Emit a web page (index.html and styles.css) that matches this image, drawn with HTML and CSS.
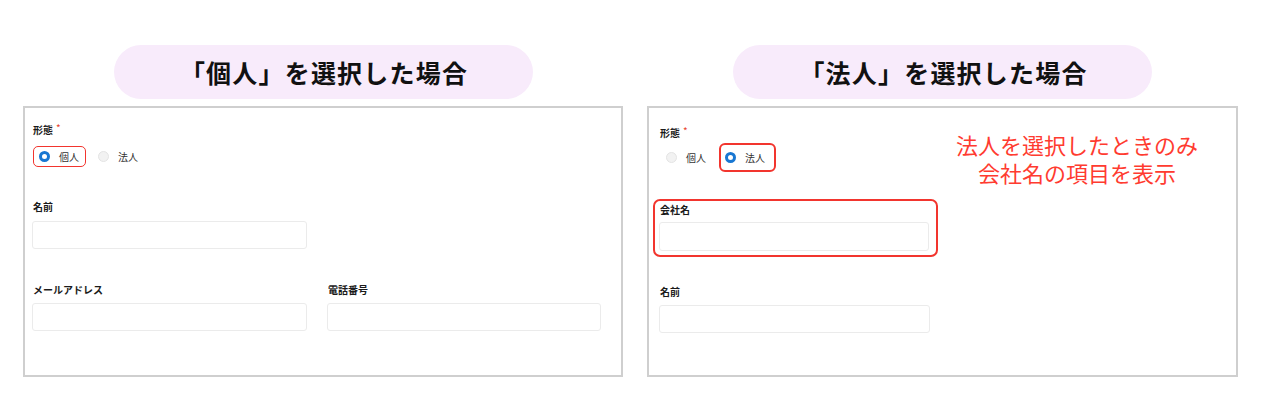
FILE: index.html
```html
<!DOCTYPE html>
<html lang="ja">
<head>
<meta charset="utf-8">
<link rel="stylesheet" href="styles.css">
</head>
<body>
<div class="page">
  <section class="col col-left">
    <h2 class="pill">「個人」を選択した場合</h2>
    <div class="panel panel-left">
      <div class="field">
        <div class="label">形態<span class="req">*</span></div>
        <div class="radios">
          <label class="radio marked"><span class="dot on"></span><span>個人</span></label>
          <label class="radio"><span class="dot"></span><span>法人</span></label>
        </div>
      </div>
      <div class="field f-name">
        <div class="label">名前</div>
        <div class="input w-half"></div>
      </div>
      <div class="row2 f-mail">
        <div class="field">
          <div class="label">メールアドレス</div>
          <div class="input"></div>
        </div>
        <div class="field">
          <div class="label">電話番号</div>
          <div class="input"></div>
        </div>
      </div>
    </div>
  </section>
  <section class="col col-right">
    <h2 class="pill">「法人」を選択した場合</h2>
    <div class="panel panel-right">
      <div class="field">
        <div class="label">形態<span class="req">*</span></div>
        <div class="radios">
          <label class="radio"><span class="dot"></span><span>個人</span></label>
          <label class="radio marked"><span class="dot on"></span><span>法人</span></label>
        </div>
      </div>
      <div class="company">
        <div class="label">会社名</div>
        <div class="input"></div>
      </div>
      <div class="field f-name2">
        <div class="label">名前</div>
        <div class="input w-right"></div>
      </div>
      <p class="note">法人を選択したときのみ<br>会社名の項目を表示</p>
    </div>
  </section>
</div>
</body>
</html>
```

FILE: styles.css
```css
* { box-sizing: border-box; }
html, body { margin: 0; padding: 0; background: #fff; }
body {
  font-family: "Noto Sans CJK JP", "Noto Sans", sans-serif;
  color: #1b1b1b;
  width: 1266px;
  height: 403px;
  overflow: hidden;
}
.page {
  display: flex;
  gap: 24px;
  padding-left: 23px;
}
.col {
  display: flex;
  flex-direction: column;
  align-items: center;
}
.col-left { width: 600px; }
.col-right { width: 591px; }
.pill {
  margin: 45px 0 0;
  width: 419px;
  height: 54px;
  border-radius: 27px;
  background: #f8ebfb;
  display: flex;
  align-items: center;
  justify-content: center;
  font-size: 25px;
  font-weight: 700;
  letter-spacing: 1.2px;
  color: #111;
  padding-left: 2px;
}
.panel {
  margin-top: 7px;
  width: 100%;
  height: 271px;
  border: 2px solid #cfcfcf;
  display: flex;
  flex-direction: column;
  position: relative;
}
.panel-left { padding: 15px 19px 0 7px; }
.panel-right { padding: 18px 10px 0 10px; }
.label {
  font-size: 10px;
  line-height: 14px;
  font-weight: 700;
  color: #1b1b1b;
  padding-left: 1px;
}
.req {
  color: #e8452f;
  font-weight: 400;
  margin-left: 3px;
  position: relative;
  top: -2px;
}
.radios {
  display: flex;
  gap: 6px;
  margin-top: 9px;
  margin-left: 1px;
}
.panel-right .radios { margin-top: 3px; gap: 2px; }
.radio {
  display: flex;
  align-items: center;
  gap: 9px;
  height: 21px;
  padding: 0 6px 0 5px;
  font-size: 10px;
  color: #333;
  border: 1.5px solid transparent;
  border-radius: 5px;
}
.panel-right .radio {
  height: 29px;
  padding: 0 9px 0 4px;
  border-width: 2px;
  border-radius: 6px;
}
.radio.marked { border-color: #f2352e; }
.dot {
  width: 11px;
  height: 11px;
  border-radius: 50%;
  background: #f2f2f2;
  border: 1px solid #e4e4e4;
  flex: none;
}
.dot.on {
  background: #fff;
  border: 3.5px solid #1877d2;
}
.input {
  margin-top: 7px;
  height: 28px;
  border: 1px solid #ebebeb;
  border-radius: 3px;
  background: #fff;
}
.w-half { width: 275px; }
.f-name { margin-top: 33px; }
.row2 {
  display: grid;
  grid-template-columns: 275px 274px;
  gap: 20px;
  margin-top: 34px;
}
.row2 .input { margin-top: 6px; }
.company {
  margin: 27px 0 0 -6px;
  width: 285px;
  height: 58px;
  border: 2px solid #f2352e;
  border-radius: 7px;
  padding: 2px 7px 0 4px;
}
.company .input { margin-top: 5px; height: 29px; }
.f-name2 { margin-top: 28px; }
.w-right { width: 271px; margin-top: 6px; }
.note {
  position: absolute;
  left: 293px;
  top: 22px;
  width: 270px;
  margin: 0;
  text-align: center;
  color: #ff3b30;
  font-size: 22px;
  line-height: 28px;
  font-weight: 400;
}
```
